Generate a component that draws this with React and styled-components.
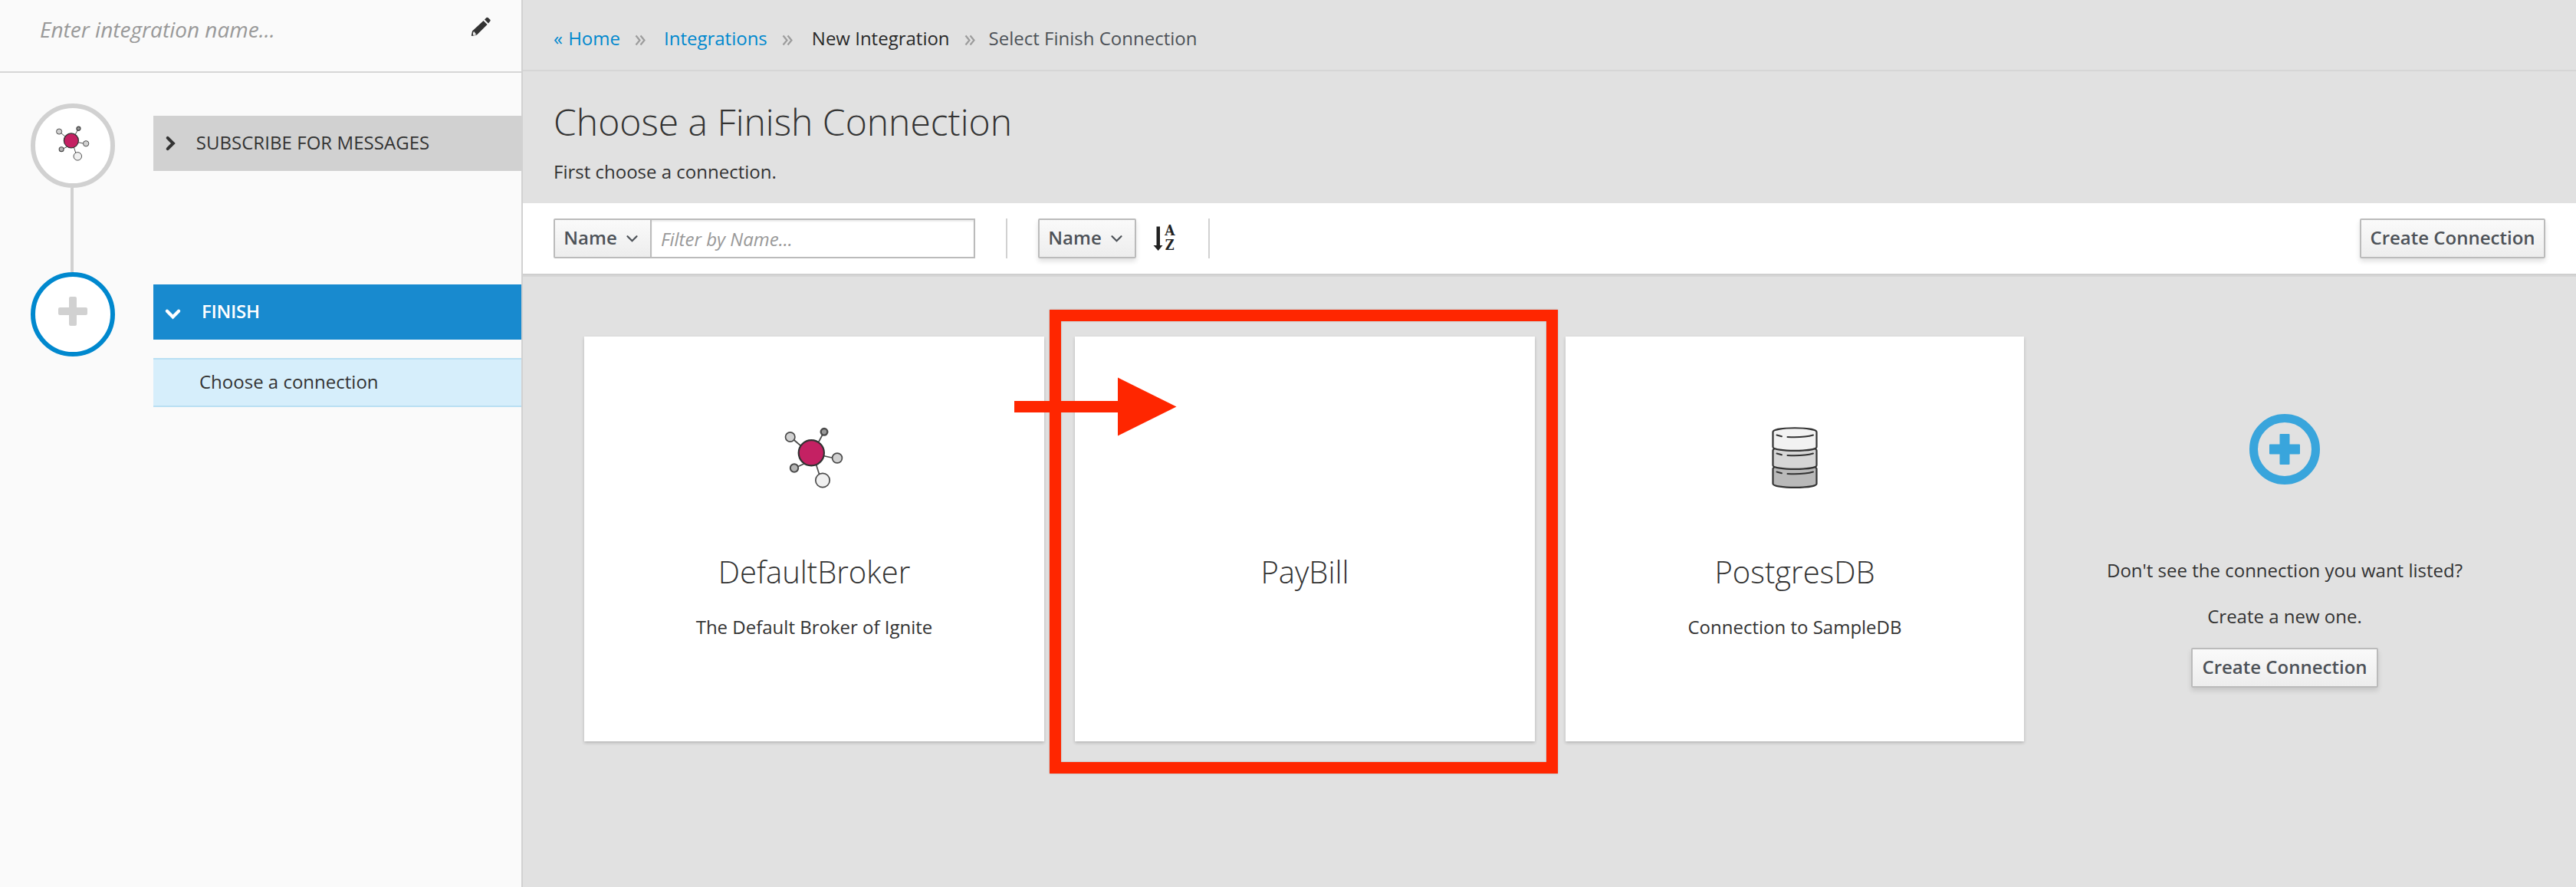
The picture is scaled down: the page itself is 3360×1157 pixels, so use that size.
import React from "react";
import styled, { createGlobalStyle, css } from "styled-components";

const Global = createGlobalStyle`
  * { box-sizing: border-box; }
  body { margin: 0; background: #e1e1e1; }
  p, h1, h2 { margin: 0; font-weight: 400; }
`;

const Page = styled.div`
  display: flex;
  width: 3360px;
  height: 1157px;
  overflow: hidden;
  font-family: "Open Sans", sans-serif;
  font-size: 24px;
  line-height: 40px;
  color: #333;
  background: #e1e1e1;
  white-space: nowrap;
`;

const Sidebar = styled.aside`
  width: 682px;
  flex: none;
  background: #fafafa;
  border-right: 2px solid #d1d1d1;
`;

const NameBar = styled.div`
  display: flex;
  justify-content: space-between;
  height: 95px;
  padding: 18px 40px 0 52px;
  border-bottom: 2px solid #d6d6d6;
  font-size: 28px;
  font-style: italic;
  color: #999;
`;

const EditIcon = styled.span`
  display: flex;
  padding-top: 4px;
`;

const Steps = styled.ol`
  list-style: none;
  margin: 0;
  padding: 40px 0 0 40px;
`;

const Step = styled.li`
  display: flex;
  gap: 50px;
`;

const Rail = styled.div`
  width: 110px;
  display: flex;
  flex-direction: column;
  align-items: center;
`;

const Bubble = styled.div`
  width: 110px;
  height: 110px;
  border-radius: 50%;
  border: 6px solid ${(p) => (p.$active ? "#0088ce" : "#d1d1d1")};
  background: #fff;
  display: flex;
  justify-content: center;
  padding-top: ${(p) => (p.$active ? "26px" : "22px")};
`;

const Connector = styled.div`
  width: 4px;
  height: 110px;
  margin-right: 2px;
  background: #d1d1d1;
`;

const StepBody = styled.div`
  flex: 1;
  padding-top: 16px;
`;

const StepTitle = styled.div`
  display: flex;
  align-items: center;
  height: 72px;
  padding: 0 0 2px 16px;
  background: ${(p) => (p.$active ? "#188acf" : "#d1d1d1")};
  color: ${(p) => (p.$active ? "#fff" : "#333")};
  font-weight: ${(p) => (p.$active ? 600 : 400)};
`;

const StepCaret = styled.span`
  display: flex;
  padding-top: ${(p) => p.$drop}px;
`;

const StepLabel = styled.span`
  margin-left: 28px;
  letter-spacing: ${(p) => p.$track}px;
`;

const SubStep = styled.div`
  height: 64px;
  margin-top: 24px;
  padding: 9px 0 0 60px;
  background: #d6eefb;
  border: solid #b9dff3;
  border-width: 2px 0;
`;

const Main = styled.main`
  flex: 1;
`;

const Crumbs = styled.nav`
  display: flex;
  height: 93px;
  padding: 30px 0 0 40px;
  border-bottom: 2px solid #d6d6d6;
`;

const Crumb = styled.span`
  color: ${(p) => p.$color};
  word-spacing: ${(p) => p.$space || 0}px;
`;

const Separator = styled.span`
  display: flex;
  width: ${(p) => p.$w}px;
  padding: 15px 0 0 19px;
`;

const Heading = styled.header`
  height: 172px;
  padding: 33px 0 0 40px;
`;

const Title = styled.h1`
  font-size: 48px;
  line-height: 66px;
  font-weight: 300;
`;

const Lead = styled.p`
  margin-top: 12px;
`;

const Toolbar = styled.div`
  display: flex;
  align-items: flex-start;
  height: 92px;
  padding: 20px 40px 0;
  background: #fff;
  box-shadow: 0 2px 0 #cfcfcf, 0 4px 0 #d6d6d6;
`;

const raised = css`
  height: 52px;
  border: 2px solid #bbb;
  border-radius: 2px;
  background: linear-gradient(#fafafa, #ededed);
  color: #4d5258;
  font: 600 24px/46px "Open Sans", sans-serif;
  display: flex;
  justify-content: center;
  gap: 12px;
`;

const Button = styled.button`
  ${raised}
  width: ${(p) => p.$w}px;
  padding: 0 ${(p) => (p.$menu ? 5 : 0)}px 0 0;
  box-shadow: 0 4px 6px rgba(3, 3, 3, 0.12);
`;

const FilterType = styled.button`
  ${raised}
  width: 128px;
  padding: 0 5px 0 0;
  border-radius: 2px 0 0 2px;
`;

const FilterInput = styled.div`
  width: 424px;
  height: 52px;
  margin-left: -2px;
  padding: 5px 12px;
  border: 2px solid #bbb;
  box-shadow: inset 0 2px 2px rgba(3, 3, 3, 0.08);
  font-style: italic;
  color: #999;
`;

const Divider = styled.div`
  width: 2px;
  height: 52px;
  margin: 0 40px;
  background: #d1d1d1;
`;

const SortIcon = styled.div`
  display: flex;
  width: 54px;
  padding: 9px 0 0 22px;
`;

const Spacer = styled.div`
  flex: 1;
`;

const Grid = styled.section`
  position: relative;
  display: grid;
  grid-template-columns: 600px 600px 598px 600px;
  column-gap: 40px;
  padding: 82px 80px 0;
`;

const Card = styled.article`
  height: 528px;
  display: flex;
  flex-direction: column;
  align-items: center;
  background: ${(p) => (p.$plain ? "none" : "#fff")};
  box-shadow: ${(p) => (p.$plain ? "none" : "0 2px 4px rgba(3, 3, 3, 0.2)")};
`;

const CardArt = styled.div`
  height: ${(p) => p.$h}px;
  padding-top: ${(p) => p.$top}px;
`;

const CardTitle = styled.h2`
  font-size: 40px;
  line-height: 54px;
  font-weight: 300;
`;

const CardText = styled.p`
  margin-top: ${(p) => p.$mt}px;
`;

const ButtonSlot = styled.div`
  margin-top: 21px;
`;

const Highlight = styled.div`
  position: absolute;
  left: 687px;
  top: 47px;
  width: 663px;
  height: 605px;
  border: 15px solid #ff2600;
  box-shadow: 0 0 2px rgba(0, 0, 0, 0.25), inset 0 0 2px rgba(0, 0, 0, 0.25);
`;

const Arrow = styled.svg`
  position: absolute;
  left: 641px;
  top: 135px;
`;

const CaretSvg = styled.svg`
  align-self: center;
  overflow: visible;
`;

const Caret = ({ s = 15, w = 3, right }) => (
  <CaretSvg
    width={right ? s * 0.65 : s}
    height={right ? s : s * 0.65}
    viewBox={right ? "0 0 13 20" : "0 0 20 13"}
  >
    <path d={right ? "M3 2l8 8-8 8" : "M2 3l8 8 8-8"} fill="none" stroke="currentColor" strokeWidth={w} strokeLinecap="round" />
  </CaretSvg>
);

const Chevrons = () => (
  <svg width="15" height="15" viewBox="0 0 15 15" fill="none" stroke="#9c9c9c" strokeWidth="2.200">
    <path d="M1.500 1.500l5 6-5 6M7.500 1.500l5 6-5 6" />
  </svg>
);

const Pencil = () => (
  <svg width="26" height="26" viewBox="0 0 26 26">
    <path d="M16.600 5l5 5L8 23.500 1.500 25 .8 24.500 2 18.500zM18 3.600L20.500 1q1.200-.8 2.300.2l2.400 2.400q1 1.100 0 2.200L23 8.500z" fill="#333" />
    <path d="M3.600 19.200l1.600.6.300 1.700 1.700.4-1.200 1.600-2.600.5-.5-1.800z" fill="#fafafa" />
  </svg>
);

const Broker = ({ w, h }) => (
  <svg width={w} height={h} viewBox="0 0 80 84">
    <g stroke="#4a4a4a" strokeWidth="1.700" transform="translate(1.700 1.500)">
      <path d="M8 14l14 12M51 7l-8 15M50 38l18 4M26 48L13 54M41 50l7 22" />
      <circle cx="7" cy="13.500" r="6.200" fill="#d1d1d1" />
      <circle cx="51.300" cy="6.800" r="4.300" fill="#999" strokeWidth="2.400" />
      <circle cx="68.300" cy="41" r="6.400" fill="#d1d1d1" />
      <circle cx="12.300" cy="54" r="5.200" fill="#b5b5b5" strokeWidth="2" />
      <circle cx="49.300" cy="70" r="9.200" fill="#f0f0f0" />
      <circle cx="34.600" cy="34.200" r="16.600" fill="#c42163" stroke="#333" strokeWidth="2.200" />
    </g>
  </svg>
);

const Database = () => (
  <svg width="60" height="81" viewBox="0 0 60 81" fill="none" stroke="#333" strokeWidth="2.200">
    {[["#b9b9b9", 48], ["#d6d6d6", 24], ["#f2f2f2", 0]].map(([fill, y]) => (
      <g key={y} transform={`translate(0 ${y})`}>
        <path d="M1.500 6.500C1.500-.5 58.500-.5 58.500 6.500V26C58.500 32.500 1.500 32.500 1.500 26z" fill={fill} />
        <path d="M6.500 10.500l6.500 1.800M20.500 13Q42 14 54 10.500" strokeWidth="2" strokeLinecap="round" />
      </g>
    ))}
  </svg>
);

const StepPlus = () => (
  <svg width="38" height="38" viewBox="0 0 38 38">
    <path d="M14 2a2 2 0 0 1 2-2h6a2 2 0 0 1 2 2v12h12a2 2 0 0 1 2 2v6a2 2 0 0 1-2 2H24v12a2 2 0 0 1-2 2h-6a2 2 0 0 1-2-2V24H2a2 2 0 0 1-2-2v-6a2 2 0 0 1 2-2h12z" fill="#d1d1d1" />
  </svg>
);

const AddCircle = () => (
  <svg width="92" height="92" viewBox="0 0 92 92">
    <circle cx="46" cy="46" r="40.500" fill="none" stroke="#39a5dc" strokeWidth="11" />
    <path d="M40.500 26h11q1 0 1 1v12.500H65q1 0 1 1v11q0 1-1 1H52.500V65q0 1-1 1h-11q-1 0-1-1V52.500H27q-1 0-1-1v-11q0-1 1-1h12.500V27q0-1 1-1z" fill="#39a5dc" />
  </svg>
);

const SortArrow = () => (
  <svg width="13" height="34" viewBox="0 0 13 34">
    <path d="M4.500 1.500h4.500v24.500h3.500L6.700 33 .5 26h4z" fill="#222" />
  </svg>
);

const SortLetters = styled.span`
  display: flex;
  flex-direction: column;
  width: 18px;
  margin-top: -3px;
  align-items: center;
  font: 700 18px/19px "DejaVu Serif", serif;
  color: #222;
`;

const SortLetter = styled.span`
  transform: scaleX(${(p) => p.$sx});
`;

export default function App() {
  return (
    <Page>
      <Global />
      <Sidebar>
        <NameBar>
          <span>Enter integration name...</span>
          <EditIcon><Pencil /></EditIcon>
        </NameBar>
        <Steps>
          <Step>
            <Rail>
              <Bubble><Broker w={46} h={48} /></Bubble>
              <Connector />
            </Rail>
            <StepBody>
              <StepTitle>
                <StepCaret $drop={2}><Caret right s={18} w={4.5} /></StepCaret>
                <StepLabel $track={0.05}>SUBSCRIBE FOR MESSAGES</StepLabel>
              </StepTitle>
            </StepBody>
          </Step>
          <Step>
            <Rail>
              <Bubble $active><StepPlus /></Bubble>
            </Rail>
            <StepBody>
              <StepTitle $active>
                <StepCaret $drop={6}><Caret s={19} w={4.5} /></StepCaret>
                <StepLabel $track={-0.3}>FINISH</StepLabel>
              </StepTitle>
              <SubStep>Choose a connection</SubStep>
            </StepBody>
          </Step>
        </Steps>
      </Sidebar>
      <Main>
        <Crumbs>
          <Crumb $color="#0088ce" $space={1}>« Home</Crumb>
          <Separator $w={57}><Chevrons /></Separator>
          <Crumb $color="#0088ce">Integrations</Crumb>
          <Separator $w={58}><Chevrons /></Separator>
          <Crumb $color="#292929">New Integration</Crumb>
          <Separator $w={51}><Chevrons /></Separator>
          <Crumb $color="#4d5258">Select Finish Connection</Crumb>
        </Crumbs>
        <Heading>
          <Title>Choose a Finish Connection</Title>
          <Lead>First choose a connection.</Lead>
        </Heading>
        <Toolbar>
          <FilterType>Name <Caret /></FilterType>
          <FilterInput>Filter by Name...</FilterInput>
          <Divider />
          <Button $w={128} $menu>Name <Caret /></Button>
          <SortIcon>
            <SortArrow />
            <SortLetters>
              <SortLetter $sx={0.95}>A</SortLetter>
              <SortLetter $sx={0.9}>Z</SortLetter>
            </SortLetters>
          </SortIcon>
          <Divider />
          <Spacer />
          <Button $w={242}>Create Connection</Button>
        </Toolbar>
        <Grid>
          <Card>
            <CardArt $h={280} $top={116}><Broker w={80} h={84} /></CardArt>
            <CardTitle>DefaultBroker</CardTitle>
            <CardText $mt={25}>The Default Broker of Ignite</CardText>
          </Card>
          <Card>
            <CardArt $h={280} $top={116} />
            <CardTitle>PayBill</CardTitle>
          </Card>
          <Card>
            <CardArt $h={280} $top={118}><Database /></CardArt>
            <CardTitle>PostgresDB</CardTitle>
            <CardText $mt={25}>Connection to SampleDB</CardText>
          </Card>
          <Card $plain>
            <CardArt $h={285} $top={101}><AddCircle /></CardArt>
            <CardText $mt={0}>Don't see the connection you want listed?</CardText>
            <CardText $mt={20}>Create a new one.</CardText>
            <ButtonSlot><Button $w={244}>Create Connection</Button></ButtonSlot>
          </Card>
          <Highlight />
          <Arrow width="212" height="77" viewBox="0 0 212 77">
            <path d="M0 31h135V0.500l76.500 38L135 76.500V46H0z" fill="#ff2600" />
          </Arrow>
        </Grid>
      </Main>
    </Page>
  );
}
